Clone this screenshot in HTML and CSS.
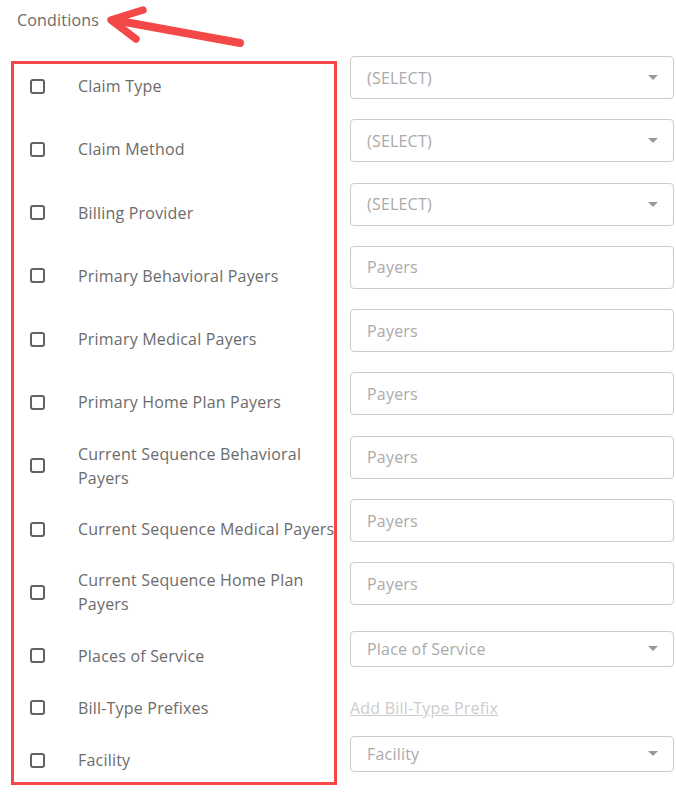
FILE: index.html
```html
<!DOCTYPE html>
<html lang="en">
<head>
    <meta charset="UTF-8"/>
    <title>Conditions</title>
    <link rel="stylesheet" href="styles.css">
</head>
<body>
<div class="page">
    <div class="heading">Conditions</div>

    <!-- annotation arrow pointing at the heading -->
    <svg class="arrow" width="260" height="60" viewBox="0 0 260 60">
        <path d="M240 43 L114 20" fill="none" stroke="#f44848" stroke-width="8" stroke-linecap="round"/>
        <path d="M143 10 L111 20 L136 39" fill="none" stroke="#f44848" stroke-width="7.5" stroke-linecap="round" stroke-linejoin="round"/>
    </svg>

    <div class="conditions">
        <div class="condList">
            <label class="cond"><input class="chk" type="checkbox"/><span class="condText">Claim Type</span></label>
            <label class="cond"><input class="chk" type="checkbox"/><span class="condText">Claim Method</span></label>
            <label class="cond"><input class="chk" type="checkbox"/><span class="condText">Billing Provider</span></label>
            <label class="cond"><input class="chk" type="checkbox"/><span class="condText">Primary Behavioral Payers</span></label>
            <label class="cond"><input class="chk" type="checkbox"/><span class="condText">Primary Medical Payers</span></label>
            <label class="cond"><input class="chk" type="checkbox"/><span class="condText">Primary Home Plan Payers</span></label>
            <label class="cond"><input class="chk" type="checkbox"/><span class="condText">Current Sequence Behavioral Payers</span></label>
            <label class="cond"><input class="chk" type="checkbox"/><span class="condText">Current Sequence Medical Payers</span></label>
            <label class="cond"><input class="chk" type="checkbox"/><span class="condText">Current Sequence Home Plan Payers</span></label>
            <label class="cond"><input class="chk" type="checkbox"/><span class="condText">Places of Service</span></label>
            <label class="cond tight"><input class="chk" type="checkbox"/><span class="condText">Bill-Type Prefixes</span></label>
            <label class="cond tight"><input class="chk" type="checkbox"/><span class="condText">Facility</span></label>
        </div>

        <div class="fieldList">
            <div class="fld sel"><span class="ph">(SELECT)</span><span class="caret"></span></div>
            <div class="fld sel"><span class="ph">(SELECT)</span><span class="caret"></span></div>
            <div class="fld sel"><span class="ph">(SELECT)</span><span class="caret"></span></div>
            <input class="fld ipt" type="text" placeholder="Payers"/>
            <input class="fld ipt" type="text" placeholder="Payers"/>
            <input class="fld ipt" type="text" placeholder="Payers"/>
            <input class="fld ipt" type="text" placeholder="Payers"/>
            <input class="fld ipt" type="text" placeholder="Payers"/>
            <input class="fld ipt" type="text" placeholder="Payers"/>
            <div class="fld sel small places"><span class="ph">Place of Service</span><span class="caret"></span></div>
            <a class="addLink" href="#">Add Bill-Type Prefix</a>
            <div class="fld sel small facility"><span class="ph">Facility</span><span class="caret"></span></div>
        </div>
    </div>
</div>
</body>
</html>
```

FILE: styles.css
```css
body {
    margin: 0;
    background-color: #fff;
    font-family: "Open Sans", "Liberation Sans", sans-serif;
    font-size: 16px;
    letter-spacing: 0.2px;
    color: #6b6b6b;
}

.page {
    position: relative;
    padding-top: 8px;
}

.heading {
    padding-left: 17px;
    line-height: 24px;
    height: 24px;
}

.arrow {
    position: absolute;
    left: 0;
    top: 0;
}

.conditions {
    display: flex;
    align-items: flex-start;
    gap: 13px;
    padding-left: 11px;
    margin-top: 24px;
}

.condList {
    width: 320px;
    margin-top: 5px;
    border: 3px solid #f44848;
    display: flex;
    flex-direction: column;
}

.cond {
    display: flex;
    align-items: center;
    height: 44px;
    margin-top: 19.3px;
}

.cond:first-child {
    margin-top: 0;
}

.cond.tight {
    margin-top: 8.2px;
}

.chk {
    appearance: none;
    -webkit-appearance: none;
    flex: 0 0 15px;
    width: 15px;
    height: 15px;
    margin: 0 33px 0 16px;
    border: 2px solid #626262;
    border-radius: 3px;
    background-color: #fff;
}

.condText {
    flex: 0 0 262px;
    line-height: 24px;
}

.fieldList {
    width: 324px;
    display: flex;
    flex-direction: column;
}

.fld {
    box-sizing: border-box;
    width: 324px;
    height: 43px;
    margin: 0 0 20.3px 0;
    border: 1px solid #ccc;
    border-radius: 4px;
    background-color: #fff;
    font-family: "Open Sans", "Liberation Sans", sans-serif;
    font-size: 16px;
    letter-spacing: 0.2px;
}

.sel {
    display: flex;
    align-items: center;
    justify-content: space-between;
    padding: 0 15px 0 16px;
}

.ipt {
    padding: 0 16px;
    color: #555;
    outline: none;
}

.ipt::placeholder,
.ph {
    color: #aaa;
}

.caret {
    width: 0;
    height: 0;
    border-left: 5px solid transparent;
    border-right: 5px solid transparent;
    border-top: 5px solid #999;
}

.small {
    height: 36px;
}

.places {
    margin-top: 5.3px;
    margin-bottom: 29px;
}

.addLink {
    line-height: 24px;
    color: #ccc;
    text-decoration: underline;
    margin-bottom: 16px;
    align-self: flex-start;
}

.facility {
    margin-bottom: 0;
}
```
